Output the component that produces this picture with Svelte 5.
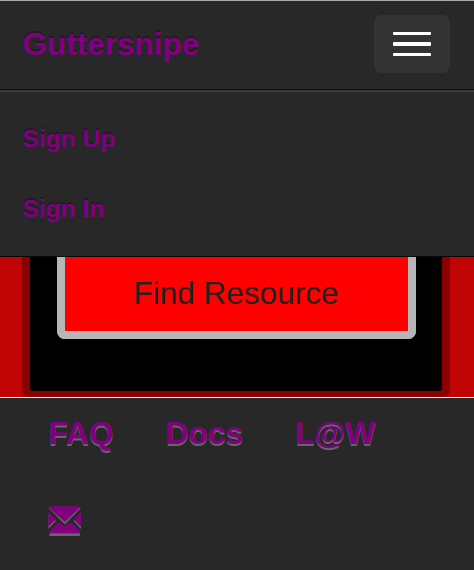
<script>
  const account = ['Sign Up', 'Sign In'];
  const links = ['FAQ', 'Docs', 'L@W'];
</script>

<div class="page">
  <header>
    <div class="bar">
      <a class="brand" href="#home">Guttersnipe</a>
      <button class="toggle" aria-label="Menu">
        <span></span><span></span><span></span>
      </button>
    </div>
    <nav class="menu">
      {#each account as item}
        <a href="#account">{item}</a>
      {/each}
    </nav>
  </header>
  <main>
    <section class="panel">
      <button class="find">Find Resource</button>
    </section>
  </main>
  <footer>
    <nav>
      {#each links as item}
        <a href="#info">{item}</a>
      {/each}
    </nav>
    <a class="mail" href="#mail" aria-label="Mail">
      <svg width="34" height="34" viewBox="0 0 34 34">
        <g fill="#666">
          <path d="M.5 4H33L16.800 20.500Z" />
          <path d="M.5 10L8 17L.5 25ZM33 10V25L25.500 17Z" />
          <path d="M1.500 30L10 20.500H12.500L16.800 24L21 20.500H23.500L32 30V32H1.500Z" />
        </g>
        <g fill="#800080">
          <path d="M1.500 2.300H32L31.500 4L16.800 18L1 4Z" />
          <path d="M.5 8L8 15.300L.5 22.800ZM33 8V22.800L25.500 15.300Z" />
          <path d="M1.500 27L10 18.800H12.500L16.800 22.500L21 18.800H23.500L32 27V29.300H1.500Z" />
        </g>
      </svg>
    </a>
  </footer>
</div>

<style>
  :global(body) { margin: 0; background: #282828; }
  .page {
    height: 570px;
    overflow: hidden;
    display: flex;
    flex-direction: column;
    font-family: "Liberation Sans", Arial, sans-serif;
    background: #282828;
  }
  a { color: #800080; text-decoration: none; font-weight: bold; }
  header {
    box-sizing: border-box;
    height: 257px;
    border-top: 1px solid #a9a9a9;
    border-bottom: 1px solid #080808;
    text-shadow: 0 -2px 0 rgba(0, 0, 0, 0.25);
  }
  .bar {
    box-sizing: border-box;
    height: 89px;
    padding: 14px 24px 0 22.5px;
    display: flex;
    justify-content: space-between;
    border-bottom: 1px solid #0d0d0d;
  }
  .brand { font-size: 31.5px; line-height: 58px; }
  .toggle {
    width: 76px;
    height: 58px;
    padding: 0;
    border: 0;
    border-radius: 8px;
    background: #333;
    display: flex;
    flex-direction: column;
    align-items: center;
    justify-content: center;
    gap: 7px;
  }
  .toggle span { width: 38px; height: 3px; border-radius: 1px; background: #fff; }
  .toggle span:nth-child(2) { height: 4px; }
  .menu {
    height: 164px;
    box-sizing: border-box;
    padding: 12px 22.5px 0;
    border-top: 2px solid #3a3a3a;
    display: flex;
    flex-direction: column;
    font-size: 24.6px;
    line-height: 70px;
  }
  main { height: 140px; padding: 0 24px 0 22px; background: #c00404; }
  .panel {
    box-sizing: border-box;
    height: 142px;
    border: 8px solid #8b0000;
    border-top: 0;
    border-radius: 0 0 10px 10px;
    padding: 0 26px 0 27px;
    background: #000;
  }
  .find {
    box-sizing: border-box;
    display: block;
    width: 100%;
    height: 82px;
    border: 8px solid #b4b6ba;
    border-top: 0;
    border-radius: 0 0 8px 8px;
    padding: 0 1px 2px 0;
    background: #f00;
    color: #222;
    font: 31.5px/72px "Liberation Sans", Arial, sans-serif;
  }
  footer {
    position: relative;
    flex: 1;
    border-top: 1px solid #fff;
    background: #282828;
    padding-left: 48px;
  }
  footer nav {
    display: flex;
    gap: 52px;
    padding-left: .5px;
    font-size: 31.7px;
    line-height: 70px;
    text-shadow: 0 2px 0 #666;
  }
  .mail { display: block; margin-top: 36px; height: 34px; }
  .mail svg { display: block; }
</style>
